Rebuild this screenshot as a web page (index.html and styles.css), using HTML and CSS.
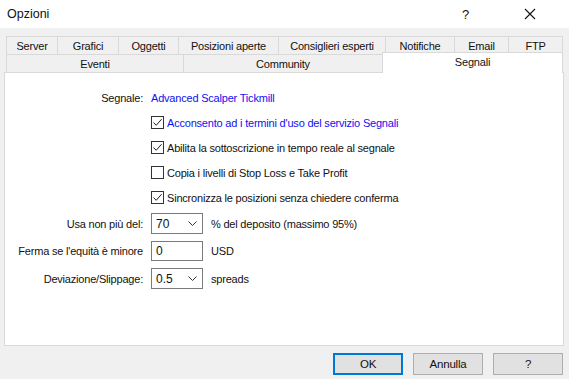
FILE: index.html
```html
<!DOCTYPE html>
<html lang="it">
<head>
<meta charset="utf-8">
<title>Opzioni</title>
<link rel="stylesheet" href="styles.css">
</head>
<body>
<div class="window">
  <div class="titlebar">
    <span class="title">Opzioni</span>
    <span class="tb-help">?</span>
    <span class="tb-close"><svg width="12" height="12" viewBox="0 0 12 12"><path d="M1 1L11 11M11 1L1 11" stroke="#111" stroke-width="1.1" fill="none"/></svg></span>
  </div>
  <div class="body">
    <div class="tabs">
      <div class="tabrow r1">
        <div class="tab w-server">Server</div>
        <div class="tab w-grafici">Grafici</div>
        <div class="tab w-oggetti">Oggetti</div>
        <div class="tab w-pos">Posizioni aperte</div>
        <div class="tab w-cons">Consiglieri esperti</div>
        <div class="tab w-notif">Notifiche</div>
        <div class="tab w-email">Email</div>
        <div class="tab w-ftp last">FTP</div>
      </div>
      <div class="tabrow r2">
        <div class="tab w-eventi">Eventi</div>
        <div class="tab w-comm">Community</div>
        <div class="tab w-segn sel last">Segnali</div>
      </div>
    </div>
    <div class="panel">
      <div class="row r-signal">
        <div class="label">Segnale:</div>
        <div class="ctrl"><span class="link">Advanced Scalper Tickmill</span></div>
      </div>
      <div class="row r-check">
        <div class="label"></div>
        <div class="ctrl"><span class="cb on"><svg width="11" height="11" viewBox="0 0 11 11"><path d="M1.5 5.5L4.2 8.3L9.6 2.2" stroke="#222" stroke-width="1" fill="none"/></svg></span><span class="link">Acconsento ad i termini d'uso del servizio Segnali</span></div>
      </div>
      <div class="row r-check">
        <div class="label"></div>
        <div class="ctrl"><span class="cb on"><svg width="11" height="11" viewBox="0 0 11 11"><path d="M1.5 5.5L4.2 8.3L9.6 2.2" stroke="#222" stroke-width="1" fill="none"/></svg></span><span>Abilita la sottoscrizione in tempo reale al segnale</span></div>
      </div>
      <div class="row r-check">
        <div class="label"></div>
        <div class="ctrl"><span class="cb"></span><span>Copia i livelli di Stop Loss e Take Profit</span></div>
      </div>
      <div class="row r-check">
        <div class="label"></div>
        <div class="ctrl"><span class="cb on"><svg width="11" height="11" viewBox="0 0 11 11"><path d="M1.5 5.5L4.2 8.3L9.6 2.2" stroke="#222" stroke-width="1" fill="none"/></svg></span><span>Sincronizza le posizioni senza chiedere conferma</span></div>
      </div>
      <div class="row r-usa">
        <div class="label">Usa non più del:</div>
        <div class="ctrl"><span class="combo"><span class="val">70</span><svg class="chev" width="9" height="5" viewBox="0 0 9 5"><path d="M0.5 0.5L4.5 4.5L8.5 0.5" stroke="#333" stroke-width="1" fill="none"/></svg></span><span class="after">% del deposito (massimo 95%)</span></div>
      </div>
      <div class="row r-ferma">
        <div class="label">Ferma se l'equità è minore</div>
        <div class="ctrl"><span class="input"><span class="val">0</span></span><span class="after">USD</span></div>
      </div>
      <div class="row r-dev">
        <div class="label">Deviazione/Slippage:</div>
        <div class="ctrl"><span class="combo"><span class="val">0.5</span><svg class="chev" width="9" height="5" viewBox="0 0 9 5"><path d="M0.5 0.5L4.5 4.5L8.5 0.5" stroke="#333" stroke-width="1" fill="none"/></svg></span><span class="after">spreads</span></div>
      </div>
    </div>
    <div class="buttons">
      <div class="btn default">OK</div>
      <div class="btn">Annulla</div>
      <div class="btn">?</div>
    </div>
  </div>
</div>
</body>
</html>
```
FILE: styles.css
```css
* { box-sizing: border-box; }
html, body { margin: 0; padding: 0; }
body {
  width: 569px;
  height: 379px;
  overflow: hidden;
  background: #f0f0f0;
  font-family: "Liberation Sans", Arial, sans-serif;
  font-size: 11px;
  letter-spacing: -0.2px;
  color: #111;
}
.window { width: 569px; height: 379px; display: flex; flex-direction: column; }
.titlebar {
  height: 28px;
  background: #fff;
  display: flex;
  align-items: center;
  padding-left: 7px;
  letter-spacing: 0;
}
.title { font-size: 12.5px; flex: 1; padding-bottom: 1px; }
.tb-help { font-size: 13px; width: 12px; margin-right: 50px; }
.tb-close { width: 12px; height: 12px; margin-right: 33px; display: flex; }
.body { flex: 1; padding-top: 8px; }
.tabs { display: flex; flex-direction: column; }
.tabrow { display: flex; height: 18px; }
.r1 { margin-left: 6px; }
.r2 { margin-left: 6px; }
.tab {
  height: 18px;
  border-top: 1px solid #d9d9d9;
  border-left: 1px solid #d9d9d9;
  background: #f0f0f0;
  display: flex;
  align-items: center;
  justify-content: center;
  white-space: nowrap;
}
.tab.last { border-right: 1px solid #d9d9d9; }
.w-server { width: 51px; }
.w-grafici { width: 61px; }
.w-oggetti { width: 60px; }
.w-pos { width: 100px; }
.w-cons { width: 107px; }
.w-notif { width: 69px; }
.w-email { width: 54px; }
.w-ftp { width: 55px; }
.w-eventi { width: 177px; }
.w-comm { width: 199px; }
.w-segn { width: 181px; }
.tab.sel {
  background: #fff;
  height: 21px;
  margin-top: -2px;
  position: relative;
  z-index: 2;
  padding-bottom: 2px;
}
.panel {
  margin-left: 4px;
  width: 560px;
  height: 274px;
  background: #fff;
  border: 1px solid #d9d9d9;
  padding-top: 12px;
}
.row { display: flex; align-items: center; }
.r-signal, .r-check { height: 25px; }
.r-usa { height: 27px; }
.r-ferma { height: 28px; }
.r-dev { height: 27px; }
.label {
  width: 138px;
  text-align: right;
  white-space: nowrap;
}
.ctrl { margin-left: 8px; display: flex; align-items: center; white-space: nowrap; }
.link { color: #1010f0; }
.cb {
  width: 13px;
  height: 13px;
  border: 1px solid #333;
  background: #fff;
  display: flex;
  align-items: center;
  justify-content: center;
  margin-right: 3px;
}
.combo, .input {
  width: 52px;
  border: 1px solid #7a7a7a;
  background: #fff;
  display: flex;
  align-items: center;
  padding-left: 4px;
  padding-right: 5px;
}
.combo { height: 21px; }
.input { height: 20px; }
.val { flex: 1; font-size: 12px; letter-spacing: 0; }
.chev { display: block; }
.after { margin-left: 8px; }
.buttons {
  display: flex;
  justify-content: flex-end;
  gap: 10px;
  padding-right: 6px;
  padding-top: 7px;
}
.btn {
  width: 70px;
  height: 22px;
  border: 1px solid #adadad;
  background: #e1e1e1;
  display: flex;
  align-items: center;
  justify-content: center;
  font-size: 11.5px;
}
.btn.default { border: 2px solid #0078d7; }
```
